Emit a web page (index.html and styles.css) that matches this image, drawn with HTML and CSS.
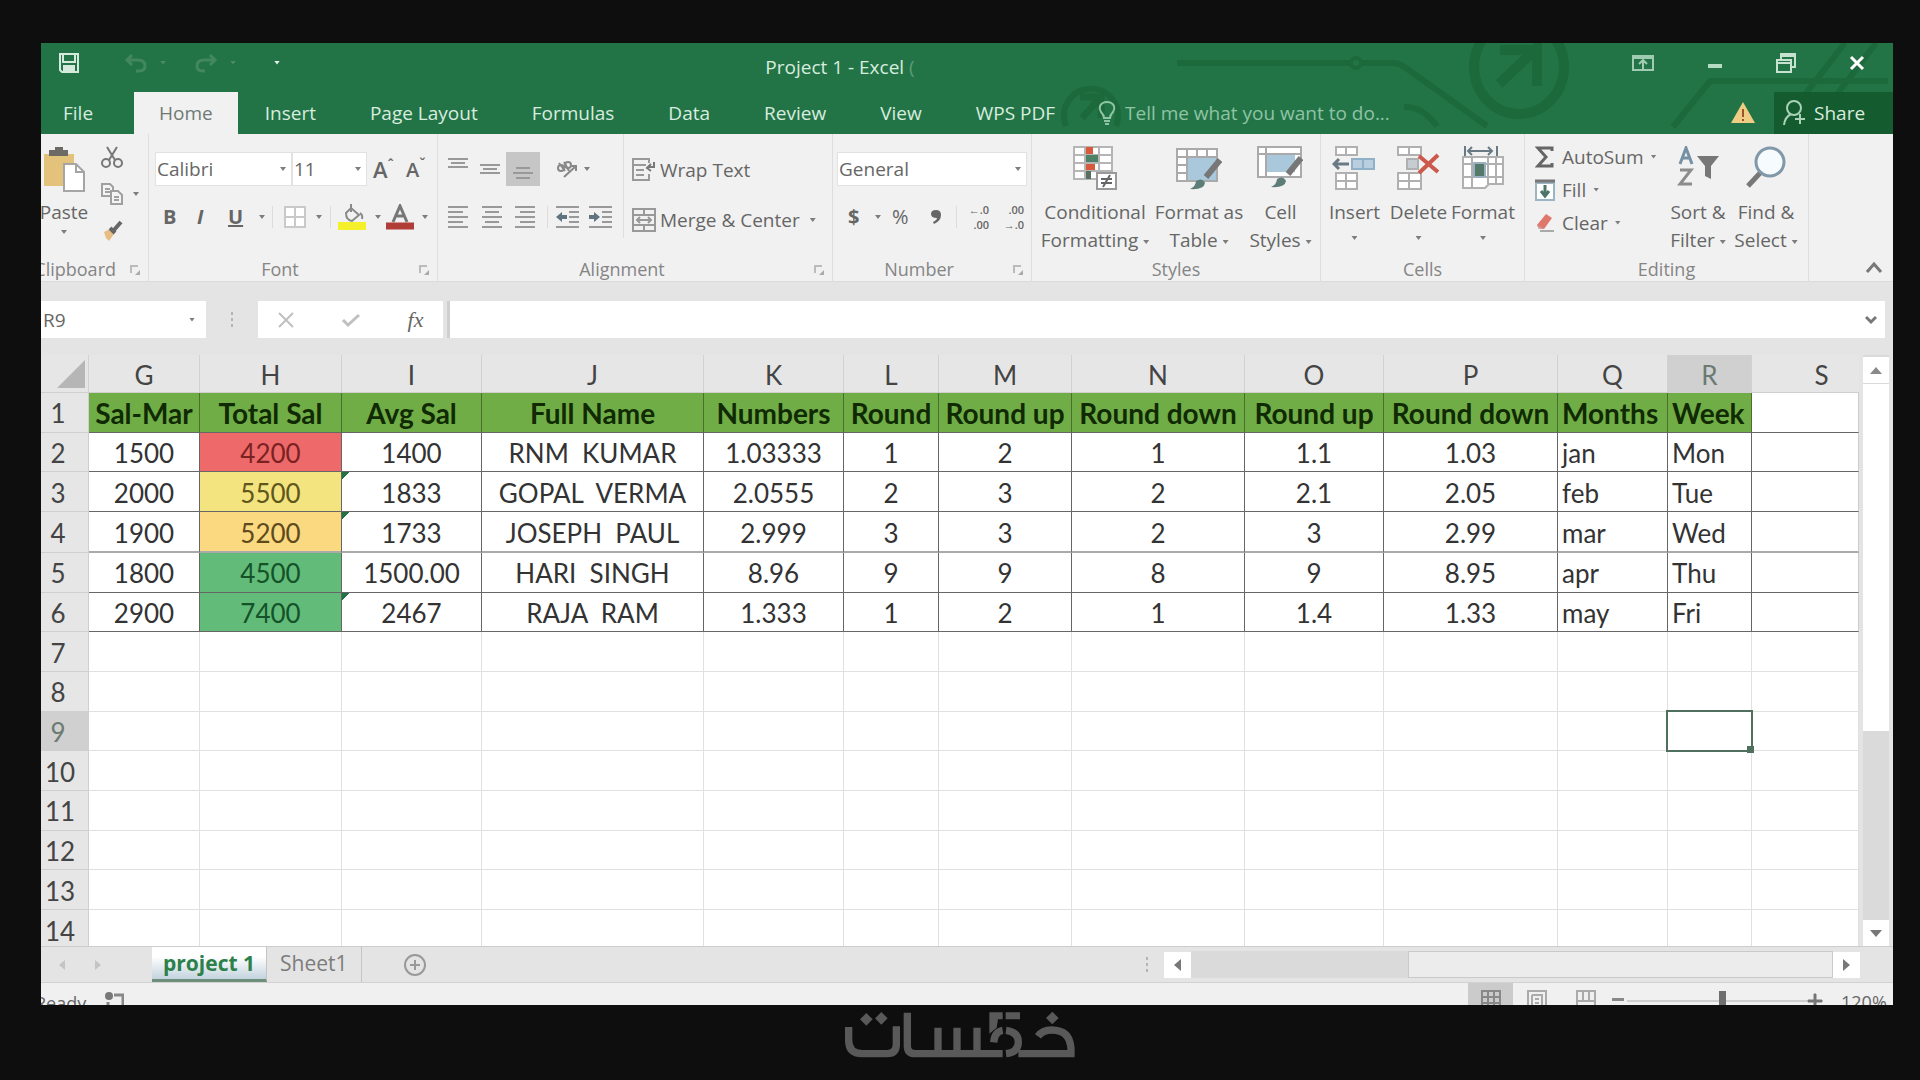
FILE: index.html
```html
<!DOCTYPE html>
<html lang="en">
<head>
<meta charset="utf-8">
<title>Project 1 - Excel</title>
<link rel="stylesheet" href="styles.css">
</head>
<body>
<main class="window">
  <header class="top">
    <svg class="art" width="720" height="91" viewBox="1173 43 720 91" fill="none" stroke="#1c693c" stroke-width="6">
      <path d="M1177 63H1392Q1400 63 1406 68L1487 126M1404 107Q1422 106 1437 126M1673 127L1710 81H1888M1845 43L1806 93M1876 43L1838 93"/>
      <circle cx="1356" cy="63" r="5" fill="#227447" stroke-width="4"/>
      <ellipse cx="1519" cy="67" rx="45" ry="47" stroke-width="10"/>
      <path d="M1499 84L1537 48V86M1500 50H1541" stroke-width="10"/>
    </svg>
    <svg class="art-ring" width="66" height="54" viewBox="0 0 66 54" fill="none" stroke="#1c693c" stroke-width="6"><path d="M8 46A27 27 0 1 1 58 46"/><path d="M22 17H43V38M43 17L24 38" stroke-width="7"/></svg>
    <div class="titlebar">
      <div class="quick">
        <button class="plain" aria-label="Save"><svg width="22" height="22" viewBox="0 0 22 22" fill="none" stroke="#d5eadc" stroke-width="2"><path d="M2 2H20V20H4L2 18Z"/><path d="M5 2V10H17V2"/><path d="M6 20V14H16V20M11 20V16" fill="#d5eadc"/></svg></button>
        <button class="plain" aria-label="Undo"><svg width="24" height="20" viewBox="0 0 24 20" fill="none" stroke="#43875f" stroke-width="3"><path d="M8 2L3 7L8 12M3 7H14Q21 7 21 13Q21 18 15 18H12"/></svg></button>
        <i class="caret faint"></i>
        <button class="plain" aria-label="Redo"><svg width="24" height="20" viewBox="0 0 24 20" fill="none" stroke="#43875f" stroke-width="3"><path d="M16 2L21 7L16 12M21 7H10Q3 7 3 13Q3 18 9 18H11"/></svg></button>
        <i class="caret faint"></i>
        <i class="caret light"></i>
      </div>
      <div class="doc-title">Project 1 - Excel <span class="dim">(</span></div>
      <div class="win-buttons">
        <button class="plain" aria-label="Ribbon display options"><svg width="24" height="18" viewBox="0 0 24 18" fill="none" stroke="#9fcbb0" stroke-width="2"><path d="M2 2H22V16H2ZM2 4H22M12 15V6M8 10L12 6L16 10"/></svg></button>
        <button class="plain" aria-label="Minimize"><svg width="16" height="18" viewBox="0 0 16 18"><path d="M1 10H15V14H1Z" fill="#b5dbc3"/></svg></button>
        <button class="plain" aria-label="Restore"><svg width="22" height="22" viewBox="0 0 22 22" fill="none" stroke="#c5e3d0" stroke-width="2"><path d="M2 8H16V20H2ZM2 11H16M6 7V2H20V15H17M6 4H20"/></svg></button>
        <button class="plain" aria-label="Close"><svg width="16" height="16" viewBox="0 0 16 16" fill="none" stroke="#fff" stroke-width="3"><path d="M2 2L14 14M14 2L2 14"/></svg></button>
      </div>
    </div>
    <nav class="tabs">
      <a class="tab file" href="#">File</a>
      <a class="tab active" href="#">Home</a>
      <a class="tab" href="#">Insert</a>
      <a class="tab" href="#">Page Layout</a>
      <a class="tab" href="#">Formulas</a>
      <a class="tab" href="#">Data</a>
      <a class="tab" href="#">Review</a>
      <a class="tab" href="#">View</a>
      <a class="tab" href="#">WPS PDF</a>
      <label class="tell"><svg width="20" height="26" viewBox="0 0 20 26" fill="none" stroke="#8fc4a4" stroke-width="2"><path d="M7 18Q7 15 4 12Q2 9 3 6Q5 2 10 2Q15 2 17 6Q18 9 16 12Q13 15 13 18ZM7 21H13M8 24H12"/></svg><input type="text" placeholder="Tell me what you want to do..."></label>
      <svg class="warn" width="26" height="24" viewBox="0 0 26 24"><path d="M13 1L25 22H1Z" fill="#f0cd84"/><path d="M12 8H14V16H12ZM12 18H14V20H12Z" fill="#a0522d"/></svg>
      <button class="share"><svg width="24" height="28" viewBox="0 0 24 28" fill="none" stroke="#a9d2b8" stroke-width="2"><circle cx="12" cy="9" r="7"/><path d="M2 26Q3 18 9 15M18 15V25M13 20H23"/></svg>Share</button>
    </nav>
  </header>

  <section class="ribbon">
    <div class="group">
      <div class="body clip">
        <button class="paste"><svg width="44" height="48" viewBox="0 0 44 48"><path d="M2 8H32V40H2Z" fill="#e3c27c"/><path d="M9 4H13V1H21V4H26V10H7V4Z" fill="#6d6a66"/><path d="M22 18H34L42 26V45H22Z" fill="#fff" stroke="#a5a5a5" stroke-width="2"/><path d="M34 18V26H42" fill="none" stroke="#a5a5a5" stroke-width="2"/></svg><span>Paste</span><i class="caret"></i></button>
        <div class="clip-tools">
          <button class="plain" aria-label="Cut"><svg width="22" height="22" viewBox="0 0 22 22" fill="none" stroke="#777" stroke-width="2"><path d="M6 1L14 14M16 1L8 14"/><circle cx="5" cy="17" r="4"/><circle cx="17" cy="17" r="4"/></svg></button>
          <button class="plain row" aria-label="Copy"><svg width="22" height="24" viewBox="0 0 22 24" fill="#f4f4f4" stroke="#a0a0a0" stroke-width="2"><path d="M1 2H9L12 5V14H1ZM4 7H9M4 10H9"/><path d="M10 9H17L21 13V22H10ZM13 15H18M13 18H18"/></svg><i class="caret"></i></button>
          <button class="plain" aria-label="Format painter"><svg width="22" height="22" viewBox="0 0 22 22"><path d="M3 12L9 9L13 14L8 21L5 18Z" fill="#e8bd85"/><path d="M9 8L14 13M13 10L20 2" stroke="#666" stroke-width="4" fill="none"/></svg></button>
        </div>
      </div>
      <div class="label end"><span>Clipboard</span><i class="launch"></i></div>
    </div>

    <div class="group">
      <div class="body two">
        <div class="line font-a">
          <span class="pick"><select aria-label="Font"><option>Calibri</option></select><i class="caret"></i></span>
          <span class="pick"><select aria-label="Font size"><option>11</option></select><i class="caret"></i></span>
          <button class="plain big-a">A<sup>ˆ</sup></button>
          <button class="plain big-a small">A<sup>ˇ</sup></button>
        </div>
        <div class="line font-b">
          <button class="plain letter"><b>B</b></button>
          <button class="plain letter"><b><em>I</em></b></button>
          <button class="plain letter"><b><u>U</u></b></button>
          <i class="caret"></i><i class="sep"></i>
          <button class="plain" aria-label="Borders"><svg width="22" height="22" viewBox="0 0 22 22" fill="#fff" stroke="#c9c9c9" stroke-width="2"><path d="M1 1H21V21H1ZM11 1V21M1 11H21"/></svg></button>
          <i class="caret"></i><i class="sep"></i>
          <button class="plain" aria-label="Fill color"><svg width="30" height="26" viewBox="0 0 30 26" fill="none" stroke="#8a8a8a" stroke-width="2"><path d="M14 4L22 11L15 17Q9 16 9 9ZM14 0V8M23 9Q26 11 25 15"/><path d="M1 22H29" stroke="#f4f02c" stroke-width="8"/></svg></button>
          <i class="caret"></i>
          <button class="plain" aria-label="Font color"><svg width="28" height="26" viewBox="0 0 28 26" fill="none" stroke="#777" stroke-width="3"><path d="M7 18L14 2L21 18M9 12H19"/><path d="M0 22H28" stroke="#b23c36" stroke-width="7"/></svg></button>
          <i class="caret"></i>
        </div>
      </div>
      <div class="label launchable"><span>Font</span><i class="launch"></i></div>
    </div>

    <div class="group">
      <div class="body align">
        <div class="two">
          <div class="line al-a">
            <button class="plain" aria-label="Top align"><svg class="lines" width="20" height="22" viewBox="0 0 20 22"><path d="M0 1H20M3 5H17M0 9H20"/></svg></button>
            <button class="plain" aria-label="Middle align"><svg class="lines" width="20" height="22" viewBox="0 0 20 22"><path d="M0 7H20M3 11H17M0 15H20"/></svg></button>
            <button class="plain on" aria-label="Bottom align"><svg class="lines" width="20" height="22" viewBox="0 0 20 22"><path d="M3 10H17M0 15H20M3 20H17"/></svg></button>
            <button class="plain" aria-label="Orientation"><svg width="22" height="20" viewBox="0 0 22 20" fill="none" stroke="#888" stroke-width="2"><circle cx="5" cy="9" r="3"/><path d="M8 3L13 12M3 4L9 12"/><circle cx="12" cy="6" r="3"/><path d="M8 18L20 7M20 12V7H15"/></svg></button>
            <i class="caret"></i>
          </div>
          <div class="line al-b">
            <button class="plain" aria-label="Align left"><svg class="lines" width="20" height="22" viewBox="0 0 20 22"><path d="M0 1H20M0 6H15M0 11H20M0 16H15M0 21H20"/></svg></button>
            <button class="plain" aria-label="Center"><svg class="lines" width="20" height="22" viewBox="0 0 20 22"><path d="M0 1H20M3 6H17M0 11H20M3 16H17M0 21H20"/></svg></button>
            <button class="plain" aria-label="Align right"><svg class="lines" width="20" height="22" viewBox="0 0 20 22"><path d="M0 1H20M5 6H20M0 11H20M5 16H20M0 21H20"/></svg></button>
            <i class="sep"></i>
            <button class="plain" aria-label="Decrease indent"><svg class="lines" width="23" height="22" viewBox="0 0 23 22"><path d="M0 1H23M13 6H23M13 11H23M13 16H23M0 21H23"/><path d="M0 11L6 6V16ZM6 9H11V13H6Z" fill="#5f7480" stroke="none"/></svg></button>
            <button class="plain" aria-label="Increase indent"><svg class="lines" width="23" height="22" viewBox="0 0 23 22"><path d="M0 1H23M13 6H23M13 11H23M13 16H23M0 21H23"/><path d="M11 11L5 6V16ZM0 9H5V13H0Z" fill="#5f7480" stroke="none"/></svg></button>
          </div>
        </div>
        <div class="two wraps">
          <button class="plain row"><svg width="24" height="24" viewBox="0 0 24 24" fill="none" stroke="#999" stroke-width="2"><path d="M17 5V1H1V22H17V16M1 7H14M4 12H12M4 17H12"/><path d="M22 4V9H16M19 6L15 10L19 13" stroke="#777"/></svg>Wrap Text</button>
          <button class="plain row"><svg width="24" height="24" viewBox="0 0 24 24" fill="none" stroke="#999" stroke-width="2"><path d="M1 1H23V23H1ZM1 7H23M1 17H23M12 1V7M12 17V23M5 12H19M8 9L5 12L8 15M16 9L19 12L16 15"/></svg>Merge &amp; Center<i class="caret"></i></button>
        </div>
      </div>
      <div class="label launchable"><span>Alignment</span><i class="launch"></i></div>
    </div>

    <div class="group">
      <div class="body two">
        <div class="line num-a"><span class="pick"><select aria-label="Number format"><option>General</option></select><i class="caret"></i></span></div>
        <div class="line num-b">
          <button class="plain letter"><b>$</b></button><i class="caret"></i>
          <button class="plain letter">%</button>
          <button class="plain" aria-label="Comma style"><svg width="12" height="16" viewBox="0 0 12 16"><path d="M1 5Q1 1 6 1Q11 1 11 6Q11 12 4 15L3 13Q7 11 7 9Q1 9 1 5Z" fill="#666"/></svg></button>
          <i class="sep"></i>
          <button class="plain tiny"><span>←.0</span><span>.00</span></button>
          <button class="plain tiny"><span>.00</span><span>→.0</span></button>
        </div>
      </div>
      <div class="label launchable"><span>Number</span><i class="launch"></i></div>
    </div>

    <div class="group">
      <div class="body large styles">
        <button class="tool"><svg width="44" height="44" viewBox="0 0 44 44"><path d="M1 1H39V33H1ZM1 9H39M1 17H39M1 25H39M12 1V33M26 1V33" fill="#fff" stroke="#b5b5b5" stroke-width="2"/><path d="M13 1H20V8H13ZM13 18H22V24H13Z" fill="#d8593c"/><path d="M13 9H25V16H13Z" fill="#4f8068"/><path d="M13 25H18V33H13Z" fill="#57705f"/><path d="M24 27H43V43H24Z" fill="#fff" stroke="#999" stroke-width="2"/><path d="M28 33H39M28 37H39M37 29L30 41" stroke="#666" stroke-width="2"/></svg><span>Conditional</span><span>Formatting <i class="caret"></i></span></button>
        <button class="tool"><svg width="46" height="44" viewBox="0 0 46 44"><path d="M1 3H41V35H1ZM1 11H41M1 19H41M1 27H41M11 3V35M21 3V35M31 3V35" fill="#fff" stroke="#aaa" stroke-width="2"/><path d="M12 12H40V34H12Z" fill="#a9c8dc"/><path d="M44 14L30 31" stroke="#777" stroke-width="6"/><path d="M14 43Q20 40 20 35Q26 31 29 37Q28 44 14 43Z" fill="#5d7d78"/></svg><span>Format as</span><span>Table <i class="caret"></i></span></button>
        <button class="tool"><svg width="46" height="44" viewBox="0 0 46 44"><path d="M1 1H44V31H1ZM1 8H44M9 1V31" fill="#fff" stroke="#aaa" stroke-width="2"/><path d="M10 9H38V26H10Z" fill="#a9c8dc"/><path d="M44 12L31 28" stroke="#777" stroke-width="6"/><path d="M14 41Q20 38 20 33Q26 29 29 35Q28 42 14 41Z" fill="#5d7d78"/></svg><span>Cell</span><span>Styles <i class="caret"></i></span></button>
      </div>
      <div class="label"><span>Styles</span></div>
    </div>

    <div class="group">
      <div class="body large cells">
        <button class="tool"><svg width="44" height="44" viewBox="0 0 44 44" fill="#fff" stroke="#b0b0b0" stroke-width="2"><path d="M4 1H25V9H4ZM14 1V9M4 27H25V43H4ZM4 35H25M14 27V43"/><path d="M20 13H42V23H20ZM31 13V23" fill="#b9cfdf" stroke="#8fb0c6"/><path d="M2 18H17M7 13L2 18L7 23" fill="none" stroke="#6a7a84" stroke-width="3"/></svg><span>Insert</span><i class="caret"></i></button>
        <button class="tool"><svg width="44" height="44" viewBox="0 0 44 44" fill="#fff" stroke="#b0b0b0" stroke-width="2"><path d="M1 1H24V9H1ZM12 1V9M1 27H24V43H1ZM1 35H24M12 27V43"/><path d="M10 13H21V23H10Z" fill="#c5cdd2"/><path d="M22 10L41 26M41 9L22 27" stroke="#cc5a4c" stroke-width="4"/></svg><span>Delete</span><i class="caret"></i></button>
        <button class="tool"><svg width="44" height="44" viewBox="0 0 44 44" fill="#fff" stroke="#b0b0b0" stroke-width="2"><path d="M2 11H42V38H28L24 42H2ZM2 18H42M2 31H42M11 11V42M27 11V38M35 11V38"/><path d="M13 17H24V31H13Z" fill="#54796a" stroke="#9ab0c0"/><path d="M7 5H31M11 1L7 5L11 9M27 1L31 5L27 9M4 0V10M36 0V10" fill="none" stroke="#6a7a84"/></svg><span>Format</span><i class="caret"></i></button>
      </div>
      <div class="label"><span>Cells</span></div>
    </div>

    <div class="group">
      <div class="body large edit">
        <div class="edit-list">
          <button class="plain row"><svg width="20" height="22" viewBox="0 0 20 22" fill="none" stroke="#666" stroke-width="3"><path d="M17 5V2H3L11 11L3 20H17V17"/></svg>AutoSum<i class="caret"></i></button>
          <button class="plain row"><svg width="20" height="22" viewBox="0 0 20 22" fill="#fff" stroke="#9db4c2" stroke-width="2"><path d="M1 4H19V21H1Z"/><path d="M0 2H20" stroke="#777" stroke-width="3"/><path d="M10 6V16M6 12L10 17L14 12" fill="none" stroke="#4d7468" stroke-width="3"/></svg>Fill<i class="caret"></i></button>
          <button class="plain row"><svg width="20" height="22" viewBox="0 0 20 22"><path d="M2 13L11 2L17 6L9 17H4Z" fill="#e0776c"/><path d="M2 13L9 17H4Z" fill="#c9a3a0"/><path d="M5 19H19" stroke="#aaa" stroke-width="2"/></svg>Clear<i class="caret"></i></button>
        </div>
        <button class="tool"><svg width="42" height="44" viewBox="0 0 42 44" fill="none" stroke-width="3"><path d="M3 18L9 2L15 18M5 12H13" stroke="#7690a5"/><path d="M3 24H14L3 38H15" stroke="#8c8c8c"/><path d="M20 10H42L34 20V33L28 30V20Z" fill="#777"/></svg><span>Sort &amp;</span><span>Filter <i class="caret"></i></span></button>
        <button class="tool"><svg width="42" height="44" viewBox="0 0 42 44" fill="#f6fbfe"><path d="M3 40L16 26" stroke="#777" stroke-width="5"/><circle cx="25" cy="16" r="14" stroke="#8198a8" stroke-width="3"/></svg><span>Find &amp;</span><span>Select <i class="caret"></i></span></button>
      </div>
      <div class="label"><span>Editing</span></div>
    </div>

    <div class="group last">
      <button class="plain" aria-label="Collapse the ribbon"><svg width="18" height="14" viewBox="0 0 18 14" fill="none" stroke="#777" stroke-width="3"><path d="M2 12L9 4L16 12"/></svg></button>
    </div>
  </section>

  <section class="formula">
    <span class="namebox"><input type="text" value="R9" aria-label="Name box"><i class="caret"></i></span>
    <svg width="6" height="20" viewBox="0 0 6 20" fill="#b5b5b5"><path d="M2 2H4V5H2ZM2 8H4V11H2ZM2 14H4V17H2Z"/></svg>
    <div class="fx">
      <button class="plain" aria-label="Cancel"><svg width="16" height="16" viewBox="0 0 16 16" stroke="#c0c0c0" stroke-width="2"><path d="M1 1L15 15M15 1L1 15"/></svg></button>
      <button class="plain" aria-label="Enter"><svg width="20" height="16" viewBox="0 0 20 16" fill="none" stroke="#c0c0c0" stroke-width="3"><path d="M2 8L7 13L18 3"/></svg></button>
      <button class="plain fn">fx</button>
    </div>
    <div class="entry"><input type="text" aria-label="Formula bar"><svg width="12" height="10" viewBox="0 0 12 10" fill="none" stroke="#777" stroke-width="3"><path d="M1 2L6 7L11 2"/></svg></div>
  </section>

  <section class="sheet">
    <div class="grid">
      <table>
        <colgroup><col class="w48"><col class="w111"><col class="w142"><col class="w140"><col class="w222"><col class="w140"><col class="w95"><col class="w133"><col class="w173"><col class="w139"><col class="w174"><col class="w110"><col class="w84"><col></colgroup>
        <thead><tr><th class="corner"><svg width="28" height="28" viewBox="0 0 28 28"><path d="M28 0V28H0Z" fill="#b6b6b6"/></svg></th><th>G</th><th>H</th><th>I</th><th>J</th><th>K</th><th>L</th><th>M</th><th>N</th><th>O</th><th>P</th><th>Q</th><th class="sel">R</th><th class="col-s">S</th></tr></thead>
        <tbody>
          <tr class="head"><th>1</th><td>Sal-Mar</td><td>Total Sal</td><td>Avg Sal</td><td>Full Name</td><td>Numbers</td><td>Round</td><td>Round up</td><td>Round down</td><td>Round up</td><td>Round down</td><td class="txt">Months</td><td class="txt">Week</td><td></td></tr>
          <tr class="data"><th>2</th><td>1500</td><td class="red">4200</td><td>1400</td><td>RNM&nbsp; KUMAR</td><td>1.03333</td><td>1</td><td>2</td><td>1</td><td>1.1</td><td>1.03</td><td class="txt">jan</td><td class="txt">Mon</td><td></td></tr>
          <tr class="data"><th>3</th><td>2000</td><td class="yellow">5500</td><td class="flag">1833</td><td>GOPAL&nbsp; VERMA</td><td>2.0555</td><td>2</td><td>3</td><td>2</td><td>2.1</td><td>2.05</td><td class="txt">feb</td><td class="txt">Tue</td><td></td></tr>
          <tr class="data soft"><th>4</th><td>1900</td><td class="amber">5200</td><td class="flag">1733</td><td>JOSEPH&nbsp; PAUL</td><td>2.999</td><td>3</td><td>3</td><td>2</td><td>3</td><td>2.99</td><td class="txt">mar</td><td class="txt">Wed</td><td></td></tr>
          <tr class="data"><th>5</th><td>1800</td><td class="green">4500</td><td>1500.00</td><td>HARI&nbsp; SINGH</td><td>8.96</td><td>9</td><td>9</td><td>8</td><td>9</td><td>8.95</td><td class="txt">apr</td><td class="txt">Thu</td><td></td></tr>
          <tr class="data"><th>6</th><td>2900</td><td class="green">7400</td><td class="flag">2467</td><td>RAJA&nbsp; RAM</td><td>1.333</td><td>1</td><td>2</td><td>1</td><td>1.4</td><td>1.33</td><td class="txt">may</td><td class="txt">Fri</td><td></td></tr>
          <tr><th>7</th><td></td><td></td><td></td><td></td><td></td><td></td><td></td><td></td><td></td><td></td><td></td><td></td><td></td></tr>
          <tr><th>8</th><td></td><td></td><td></td><td></td><td></td><td></td><td></td><td></td><td></td><td></td><td></td><td></td><td></td></tr>
          <tr><th class="sel">9</th><td></td><td></td><td></td><td></td><td></td><td></td><td></td><td></td><td></td><td></td><td></td><td class="cursor"></td><td></td></tr>
          <tr><th>10</th><td></td><td></td><td></td><td></td><td></td><td></td><td></td><td></td><td></td><td></td><td></td><td></td><td></td></tr>
          <tr><th>11</th><td></td><td></td><td></td><td></td><td></td><td></td><td></td><td></td><td></td><td></td><td></td><td></td><td></td></tr>
          <tr><th>12</th><td></td><td></td><td></td><td></td><td></td><td></td><td></td><td></td><td></td><td></td><td></td><td></td><td></td></tr>
          <tr><th>13</th><td></td><td></td><td></td><td></td><td></td><td></td><td></td><td></td><td></td><td></td><td></td><td></td><td></td></tr>
          <tr><th>14</th><td></td><td></td><td></td><td></td><td></td><td></td><td></td><td></td><td></td><td></td><td></td><td></td><td></td></tr>
        </tbody>
      </table>
    </div>
    <div class="vscroll">
      <button class="arrow" aria-label="Scroll up"><svg width="12" height="7" viewBox="0 0 12 7"><path d="M0 7L6 0L12 7Z" fill="#8a8a8a"/></svg></button>
      <div class="vthumb"></div>
      <button class="arrow" aria-label="Scroll down"><svg width="12" height="7" viewBox="0 0 12 7"><path d="M0 0L6 7L12 0Z" fill="#777"/></svg></button>
    </div>
  </section>

  <footer class="sheetbar">
    <div class="nav"><svg width="6" height="10" viewBox="0 0 6 10"><path d="M6 0L0 5L6 10Z" fill="#c4c4c4"/></svg><svg width="6" height="10" viewBox="0 0 6 10"><path d="M0 0L6 5L0 10Z" fill="#c4c4c4"/></svg></div>
    <a class="stab current" href="#">project 1</a>
    <a class="stab" href="#">Sheet1</a>
    <button class="plain add" aria-label="New sheet"><svg width="22" height="22" viewBox="0 0 22 22" fill="none" stroke="#999" stroke-width="2"><circle cx="11" cy="11" r="10"/><path d="M11 6V16M6 11H16"/></svg></button>
    <div class="hscroll">
      <svg width="4" height="20" viewBox="0 0 4 20" fill="#b5b5b5"><path d="M1 2H3V5H1ZM1 8H3V11H1ZM1 14H3V17H1Z"/></svg>
      <button class="arrow" aria-label="Scroll left"><svg width="7" height="12" viewBox="0 0 7 12"><path d="M7 0L0 6L7 12Z" fill="#777"/></svg></button>
      <div class="htrack"><div class="hthumb"></div></div>
      <button class="arrow" aria-label="Scroll right"><svg width="7" height="12" viewBox="0 0 7 12"><path d="M0 0L7 6L0 12Z" fill="#777"/></svg></button>
    </div>
  </footer>

  <footer class="status">
    <span class="ready">Ready</span>
    <svg class="macro" width="20" height="20" viewBox="0 0 20 20"><circle cx="5" cy="4" r="4" fill="#777"/><path d="M10 3H19V19H4V10" fill="none" stroke="#888" stroke-width="3"/></svg>
    <div class="views">
      <button class="view on" aria-label="Normal"><svg width="20" height="20" viewBox="0 0 20 20" fill="none" stroke="#888" stroke-width="2"><path d="M1 1H19V19H1ZM1 7H19M1 13H19M7 1V19M13 1V19"/></svg></button>
      <button class="view" aria-label="Page layout"><svg width="20" height="20" viewBox="0 0 20 20" fill="none" stroke="#aaa" stroke-width="2"><path d="M1 1H19V19H1ZM5 5H15V19M5 5V19M8 9H12M8 13H12"/></svg></button>
      <button class="view" aria-label="Page break preview"><svg width="20" height="20" viewBox="0 0 20 20" fill="none" stroke="#aaa" stroke-width="2"><path d="M1 19V1H19V19M7 1V11H13V1M1 11H19"/></svg></button>
      <button class="plain" aria-label="Zoom out"><svg width="14" height="14" viewBox="0 0 14 14"><path d="M1 5H13V8H1Z" fill="#888"/></svg></button>
      <input class="zoom" type="range" min="0" max="100" value="53" aria-label="Zoom">
      <button class="plain" aria-label="Zoom in"><svg width="16" height="16" viewBox="0 0 16 16"><path d="M1 7H15V9H1ZM7 1H9V15H7Z" fill="#777" stroke="#777"/></svg></button>
      <span class="pct">120%</span>
    </div>
  </footer>
</main>
<div class="brand">
  <svg role="img" aria-label="خمسات" width="232" height="48" viewBox="132 212 696 144" fill="none" stroke="#595959" stroke-width="22">
    <path d="M146 260V300Q146 340 186 340H262Q289 340 289 312V258"/>
    <path d="M322 217V316Q322 340 346 340H608M414 262V340M471 262V340M531 262V340"/>
    <path d="M655 340H813Q816 276 768 270Q730 265 714 288"/>
    <path d="M568 216H608V237H594L590 262L568 280ZM617 216H660V237H617Z" fill="#595959" stroke="none"/>
    <path d="M581 306Q584 274 608 270M618 270Q655 275 655 305Q655 336 618 340"/>
    <path d="M199 218L218 237L199 256L180 237ZM244 215L263 234L244 253L225 234ZM757 214L776 233L757 252L738 233Z" fill="#595959" stroke="none"/>
  </svg>
</div>
</body>
</html>
```

FILE: styles.css
```css
* { box-sizing: border-box; }
body {
  margin: 0;
  padding: 43px 27px 0 41px;
  background: #0e0e0e;
  color: #666;
  font: 19px/24px "Open Sans", "Noto Sans", sans-serif;
}
button, input, select { font: inherit; color: inherit; }
input, select { width: 100%; min-width: 0; border: 0; outline: 0; background: none; appearance: none; }
button, .plain { border: 0; padding: 0; background: none; }
svg { display: block; flex: none; }
a { color: inherit; text-decoration: none; }

.window { background: #e4e4e4; overflow: hidden; }
.row { display: flex; align-items: center; white-space: nowrap; }
.caret {
  display: inline-block;
  flex: none;
  width: 6px;
  height: 4px;
  background: #7d7d7d;
  clip-path: polygon(0 0, 100% 0, 50% 100%);
  vertical-align: middle;
}
.caret.faint { background: #4b8d68; }
.caret.light { background: #e6f3eb; }
.sep { width: 1px; height: 22px; background: #dcdcdc; }

/* Title bar and tabs */
.top { position: relative; background: #227447; color: #d8ecdf; }
.art { position: absolute; top: 0; right: 0; }
.art-ring { position: absolute; top: 37px; left: 1017px; }
.titlebar { position: relative; display: grid; grid-template-columns: 1fr auto 1fr; height: 49px; }
.quick { display: grid; grid-template-columns: 66px 36px 34px 36px 44px 10px; align-items: center; padding: 0 0 10px 17px; }
.doc-title { align-self: center; padding: 0 254px 2px 0; }
.dim { color: #5d9c78; }
.win-buttons { display: grid; grid-template-columns: 24px 16px 22px 16px; gap: 0 52px; justify-content: end; align-items: center; padding: 0 28px 10px 0; }
.tabs { position: relative; display: flex; height: 42px; }
.tab { padding: 9px 27px 0; white-space: nowrap; }
.tab.file { width: 93px; padding-left: 22px; }
.tab.active { background: #f1f1f1; color: #6f7a74; padding: 9px 25px 0; }
.tell { display: flex; flex: 1; align-items: center; gap: 6px; color: #8fc4a4; padding-left: 15px; }
.tell input::placeholder { color: #8fc4a4; opacity: 1; }
.warn { align-self: center; margin-right: 18px; }
.share { display: flex; align-items: center; gap: 8px; width: 119px; padding-left: 8px; background: #145c2f; }

/* Ribbon */
.ribbon {
  display: grid;
  grid-template-columns: 108px 289px 395px 199px 289px 204px 284px 1fr;
  height: 148px;
  background: #f1f1f1;
  border-bottom: 1px solid #dadada;
}
.group { position: relative; display: flex; flex-direction: column; border-right: 1px solid #dedede; min-width: 0; }
.group.last { align-items: end; justify-content: end; border: 0; padding: 0 10px 8px 0; }
.body { height: 122px; }
.label { display: grid; grid-template-columns: 1fr auto 1fr; align-items: center; height: 26px; font-size: 18px; color: #858585; }
.label span { grid-column: 2; }
.label.launchable { grid-template-columns: 1fr auto 1fr 26px; }
.launchable .launch { grid-column: 4; }
.label.end { display: flex; justify-content: end; gap: 14px; }
.launch { justify-self: end; width: 8px; height: 8px; margin-right: 10px; border-top: 2px solid #bbb; border-left: 2px solid #bbb; }
.launch::after { content: ""; display: block; width: 5px; height: 5px; margin: 3px 0 0 3px; background: #aaa; clip-path: polygon(100% 0, 100% 100%, 0 100%); }
.two { display: grid; grid-template-rows: 34px 34px; gap: 14px; padding-top: 18px; align-content: start; }
.line { display: grid; align-items: center; }

.clip { display: grid; grid-template-columns: 56px 1fr; padding-top: 12px; }
.paste { display: flex; flex-direction: column; align-items: center; gap: 6px; width: 46px; }
.clip-tools { display: flex; flex-direction: column; gap: 14px; padding-left: 4px; }
.clip-tools .row { gap: 10px; }

.pick { display: grid; align-items: center; height: 34px; background: #fff; border: 1px solid #e2e2e2; }
.pick > * { grid-area: 1 / 1; }
.pick .caret { justify-self: end; margin-right: 5px; }
.pick select { height: 32px; padding: 0 1px; }
.font-a { grid-template-columns: 137px 75px 32px 32px; padding-left: 6px; }
.font-b { grid-template-columns: 34px 31px 31px 13px 12px 32px 14px 7px 38px 11px 36px 6px; padding-left: 14px; }
.font-a .big-a { font-size: 22px; font-weight: 600; text-align: left; padding-left: 6px; white-space: nowrap; }
.font-a .small { font-size: 20px; padding-left: 7px; }
.big-a sup { font-size: 14px; line-height: 1; }
.letter { font-size: 20px; text-align: left; }

.align { display: grid; grid-template-columns: 186px 1fr; }
.align .two:first-child { border-right: 1px solid #dedede; height: 104px; }
.al-a { grid-template-columns: 32px 26px 50px 28px 8px; padding-left: 10px; }
.al-a .on { display: grid; place-items: center; width: 34px; height: 34px; background: #c6c6c6; }
.al-b { grid-template-columns: 34px 33px 32px 9px 33px 24px; padding-left: 10px; }
.lines { fill: none; stroke: #999; stroke-width: 2; }
.two.wraps { grid-template-rows: 36px 36px; }
.wraps .row { gap: 4px; padding-left: 8px; }
.wraps .caret { margin-left: 6px; }

.num-a { padding: 0 4px; }
.num-b { grid-template-columns: 27px 17px 38px 26px 7px 35px 24px; padding-left: 15px; }
.tiny { display: grid; grid-template-rows: 15px 15px; justify-items: end; font-size: 11px; line-height: 15px; font-weight: 600; width: 26px; }

.large { display: grid; padding-top: 12px; justify-items: center; align-items: start; }
.tool { display: flex; flex-direction: column; align-items: center; line-height: 28px; white-space: nowrap; }
.tool svg { margin-bottom: 8px; }
.tool > .caret { margin-top: 10px; }
.styles { grid-template-columns: 126px 82px 81px; }
.cells { grid-template-columns: 67px 61px 68px; }
.edit { grid-template-columns: 140px 66px 70px; }
.edit-list { display: grid; grid-template-rows: 33px 33px 33px; justify-self: start; margin-top: -6px; padding-left: 10px; }
.edit-list .row { gap: 7px; }

/* Formula bar */
.formula { display: flex; align-items: center; padding: 19px 8px 17px 0; }
.formula > svg { margin: 0 23px; }
.namebox, .entry, .fx { display: flex; align-items: center; height: 37px; background: #fff; }
.namebox { width: 165px; padding-right: 11px; }
.fx { width: 185px; gap: 47px; justify-content: center; margin-right: 4px; }
.fn { font: italic 22px "Liberation Serif", serif; }
.entry { flex: 1; border-left: 3px solid #cfcfcf; padding-right: 8px; }

/* Sheet */
.sheet { display: grid; grid-template-columns: 1fr 30px; height: 591px; background: #e4e4e4; }
.grid { overflow: hidden; padding-right: 4px; }
table { width: 100%; height: 595px; table-layout: fixed; border-spacing: 0; background: #fff; font: 26px/30px Lato, "Open Sans", sans-serif; color: #333; }
th, td { padding: 2px 0 0; border-right: 1px solid #e0e0e0; border-bottom: 1px solid #e0e0e0; text-align: center; white-space: nowrap; }
th { background: #e6e6e6; color: #444; font-weight: 400; border-color: #cfcfcf; }
thead tr { height: 38px; }
thead th { border-right-color: #d2d2d2; }
tbody th { text-align: left; padding-left: 4px; }
tbody tr:nth-child(-n+9) th { padding: 2px 13px 0 0; text-align: center; }
th.corner { padding: 0 4px 0 16px; }
th.sel { background: #d0d0d0; color: #6b7a72; }
th.col-s { border-right: 0; padding-left: 32px; }
.w48 { width: 48px; } .w84 { width: 84px; } .w95 { width: 95px; } .w110 { width: 110px; } .w111 { width: 111px; }
.w133 { width: 133px; } .w139 { width: 139px; } .w140 { width: 140px; } .w142 { width: 142px; }
.w173 { width: 173px; } .w174 { width: 174px; } .w222 { width: 222px; }
.head td, .data td { border-color: #666; }
.head td { background: #70ad47; color: #102a04; font-size: 28px; font-weight: 700; border-right-color: #47702c; }
.head td:last-child { background: #fff; border-right-color: #ccc; }
.data td:last-child { border-right-color: #ccc; }
.soft td { border-bottom: 2px solid #aaa; }
td.txt { text-align: left; padding-left: 4px; }
.data .red { background: #ee6a6a; color: #7a2222; }
.data .yellow { background: #f4e47f; color: #5e571c; }
.data .amber { background: #fbd980; color: #5e4a1c; }
.data .green { background: #63bb79; color: #145229; }
.flag { background: linear-gradient(135deg, #217346 5px, transparent 5px); }
.cursor { position: relative; }
.cursor::before { content: ""; position: absolute; inset: -2px; border: 2px solid #50705f; }
.cursor::after { content: ""; position: absolute; right: -3px; bottom: -3px; width: 7px; height: 7px; background: #50705f; }

.vscroll { display: flex; flex-direction: column; width: 26px; padding-top: 2px; background: #dadada; }
.arrow { display: grid; place-items: center; flex: none; width: 26px; height: 26px; background: #fff; }
.vthumb { height: 347px; margin: 1px 0 auto; background: #fff; }

/* Sheet tabs */
.sheetbar { display: flex; height: 37px; border-top: 1px solid #cdcdcd; border-bottom: 1px solid #d2d2d2; background: #e4e4e4; font-size: 21px; }
.nav { display: flex; align-items: center; gap: 30px; width: 111px; padding-left: 18px; }
.stab { padding: 4px 13px 0; color: #7c7c7c; border-right: 1px solid #c4c4c4; }
.stab.current { padding: 4px 11px 0; background: linear-gradient(#fff 30%, #c3d3de); color: #2c8049; font-weight: 700; border-bottom: 3px solid #6d8f7b; }
.add { margin-left: 42px; }
.hscroll { display: flex; align-items: center; gap: 15px; width: 715px; margin: 0 33px 0 auto; }
.hscroll .arrow { width: 27px; }
.htrack { flex: 1; height: 27px; margin: 0 -15px; padding-left: 217px; background: #dadada; }
.hthumb { height: 27px; background: #ececec; border: 1px solid #cacaca; }

/* Status bar, cut by the frame */
.status { display: flex; align-items: start; height: 22px; overflow: hidden; background: #f0f0f0; font-size: 18px; }
.ready { margin: 10px 18px 0 -6px; line-height: 20px; }
.macro { margin-top: 9px; }
.views { display: grid; grid-template-columns: 45px 48px 50px 16px 180px 22px 56px; align-items: start; margin-left: auto; padding-right: 8px; }
.view { display: grid; justify-items: center; padding-top: 7px; height: 22px; }
.view.on { background: #cbcbcb; }
.views .plain { padding-top: 10px; }
.zoom { height: 22px; margin: 7px 0 0; }
.zoom::-webkit-slider-runnable-track { height: 2px; background: #cfcfcf; }
.zoom::-webkit-slider-thumb { appearance: none; width: 7px; height: 20px; margin-top: -9px; background: #6f6f6f; }
.pct { margin: 9px 0 0 12px; line-height: 20px; }

.brand { display: flex; justify-content: center; padding: 6px 0 20px; margin-right: 14px; }
```
